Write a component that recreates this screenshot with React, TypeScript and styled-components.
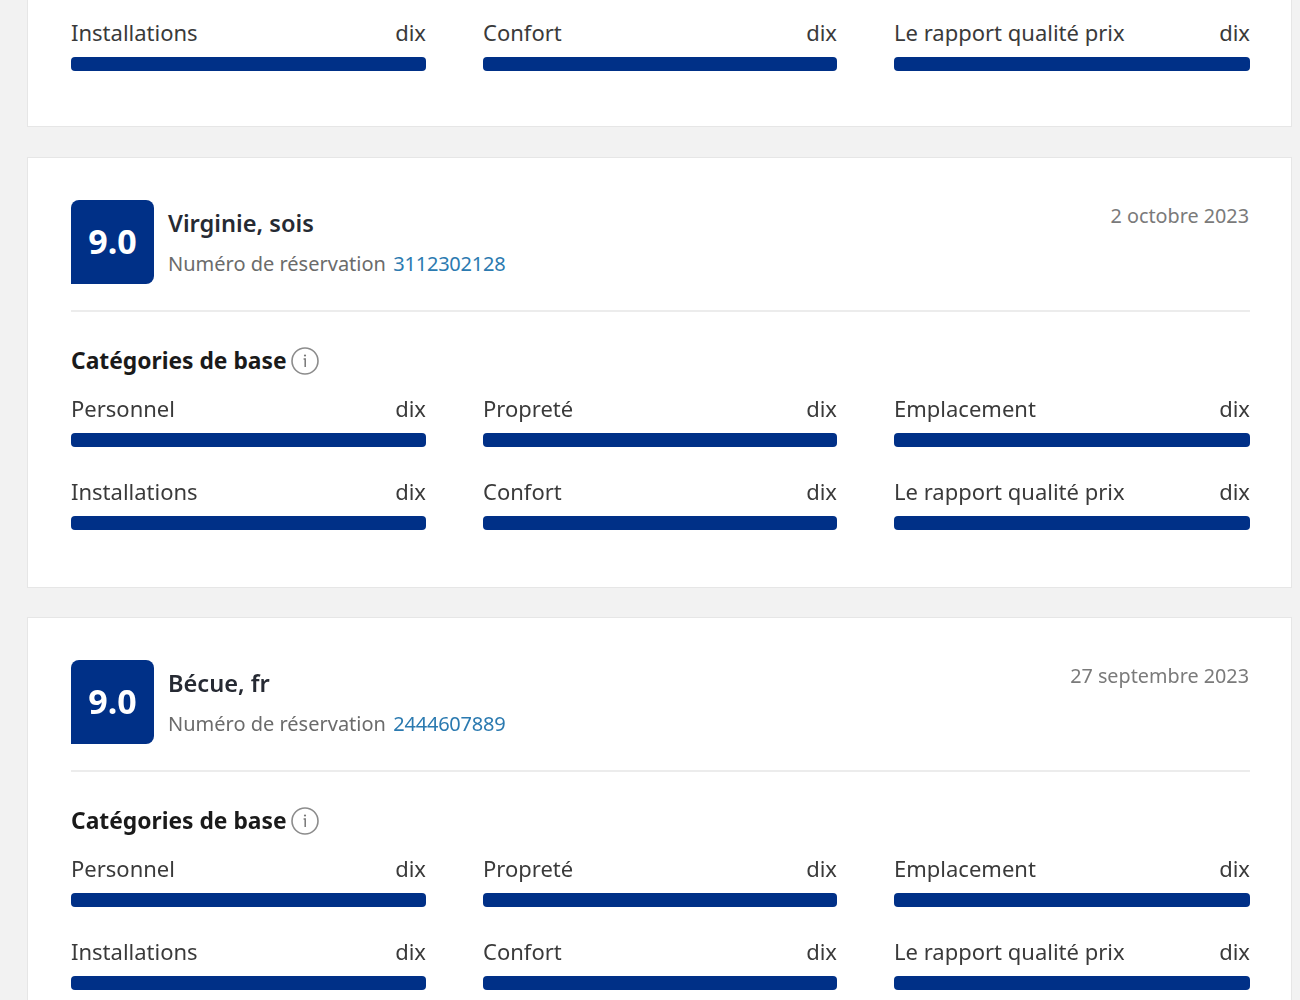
import { createGlobalStyle } from "styled-components";
import styled from "styled-components";

const GlobalStyle = createGlobalStyle`
  html, body {
    margin: 0;
    height: 1000px;
    overflow: hidden;
    background: #f2f2f2;
    font-family: "Noto Sans", "Open Sans", Arial, sans-serif;
  }
`;

const Page = styled.div`
  display: flex;
  flex-direction: column;
  gap: 29px;
  padding: 0 8px 0 27px;
  filter: blur(0.4px);
`;

const Card = styled.section<{ $clipped?: boolean }>`
  background: #fff;
  border: 1px solid #e6e6e6;
  border-top-width: ${(p) => (p.$clipped ? 0 : 1)}px;
  margin-bottom: ${(p) => (p.$clipped ? 1 : 0)}px;
  padding: ${(p) => (p.$clipped ? "17px 41px 55px 43px" : "42px 41px 57px 43px")};
`;

const Header = styled.div`
  display: flex;
  align-items: flex-start;
  justify-content: space-between;
  padding-bottom: 26px;
  border-bottom: 2px solid #ececec;
`;

const Guest = styled.div`
  display: flex;
  gap: 14px;
`;

const Badge = styled.div`
  width: 83px;
  height: 84px;
  padding-bottom: 2px;
  box-sizing: border-box;
  display: flex;
  align-items: center;
  justify-content: center;
  background: #003087;
  border-radius: 8px 8px 8px 0;
  color: #fff;
  font-size: 34px;
  font-weight: 700;
`;

const GuestInfo = styled.div`
  display: flex;
  flex-direction: column;
  gap: 11px;
  padding-top: 8px;
`;

const GuestName = styled.div`
  font-size: 23.6px;
  line-height: 31px;
  font-weight: 600;
  color: #262a33;
`;

const Booking = styled.div`
  font-size: 20px;
  line-height: 27px;
  color: #6b6b6b;
`;

const BookingLink = styled.a`
  margin-left: 2px;
  letter-spacing: -0.2px;
  color: #2b7ab0;
`;

const DateText = styled.div`
  font-size: 19.8px;
  line-height: 27px;
  color: #7a7a7a;
  padding: 2px 1px 0 0;
`;

const Section = styled.div`
  padding-top: 32px;
`;

const SectionTitle = styled.h3`
  display: flex;
  align-items: center;
  gap: 3px;
  margin: 0 0 15px;
  font-size: 22.8px;
  line-height: 34px;
  font-weight: 700;
  color: #1a1a1a;
`;

const Grid = styled.div`
  display: grid;
  grid-template-columns: 355px 354px 356px;
  column-gap: 57px;
  row-gap: 29px;
`;

const Metric = styled.div`
  display: flex;
  flex-direction: column;
  gap: 10px;
`;

const MetricHead = styled.div`
  display: flex;
  justify-content: space-between;
  font-size: 22px;
  line-height: 30px;
  color: #3a3a3a;
`;

const Bar = styled.div`
  height: 14px;
  background: #003087;
  border-radius: 4px;
`;

const labels = ["Personnel", "Propreté", "Emplacement", "Installations", "Confort", "Le rapport qualité prix"];

const InfoIcon = () => (
  <svg width="30" height="30" viewBox="0 0 30 30" fill="none" aria-hidden="true">
    <circle cx="15" cy="15" r="13" stroke="#8c8c8c" strokeWidth="1.6" />
    <circle cx="15" cy="9.5" r="1.1" fill="#777" />
    <path d="M13.6 13h1.6v8" stroke="#777" strokeWidth="1.5" />
  </svg>
);

const Metrics = ({ items }: { items: string[] }) => (
  <Grid>
    {items.map((label) => (
      <Metric key={label}>
        <MetricHead>
          <span>{label}</span>
          <span>dix</span>
        </MetricHead>
        <Bar />
      </Metric>
    ))}
  </Grid>
);

const reviews = [
  { name: "Virginie, sois", booking: "3112302128", date: "2 octobre 2023" },
  { name: "Bécue, fr", booking: "2444607889", date: "27 septembre 2023" },
];

export default function App() {
  return (
    <>
      <GlobalStyle />
      <Page>
        <Card $clipped>
          <Metrics items={labels.slice(3)} />
        </Card>
        {reviews.map((review) => (
          <Card key={review.booking}>
            <Header>
              <Guest>
                <Badge>9.0</Badge>
                <GuestInfo>
                  <GuestName>{review.name}</GuestName>
                  <Booking>
                    Numéro de réservation <BookingLink>{review.booking}</BookingLink>
                  </Booking>
                </GuestInfo>
              </Guest>
              <DateText>{review.date}</DateText>
            </Header>
            <Section>
              <SectionTitle>
                Catégories de base
                <InfoIcon />
              </SectionTitle>
              <Metrics items={labels} />
            </Section>
          </Card>
        ))}
      </Page>
    </>
  );
}
